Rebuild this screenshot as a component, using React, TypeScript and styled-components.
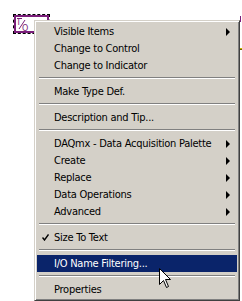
import styled, { createGlobalStyle } from "styled-components";

const GlobalStyle = createGlobalStyle`
    html, body {
        margin: 0;
        padding: 0;
        background: #ffffff;
    }
`;

type MenuEntry =
    | { kind: "item"; label: string; submenu?: boolean; checked?: boolean; active?: boolean }
    | { kind: "separator" };

const ENTRIES: MenuEntry[] = [
    { kind: "item", label: "Visible Items", submenu: true },
    { kind: "item", label: "Change to Control" },
    { kind: "item", label: "Change to Indicator" },
    { kind: "separator" },
    { kind: "item", label: "Make Type Def." },
    { kind: "separator" },
    { kind: "item", label: "Description and Tip..." },
    { kind: "separator" },
    { kind: "item", label: "DAQmx - Data Acquisition Palette", submenu: true },
    { kind: "item", label: "Create", submenu: true },
    { kind: "item", label: "Replace", submenu: true },
    { kind: "item", label: "Data Operations", submenu: true },
    { kind: "item", label: "Advanced", submenu: true },
    { kind: "separator" },
    { kind: "item", label: "Size To Text", checked: true },
    { kind: "separator" },
    { kind: "item", label: "I/O Name Filtering...", active: true },
    { kind: "separator" },
    { kind: "item", label: "Properties" },
];

const Canvas = styled.div`
    position: relative;
    width: 242px;
    height: 301px;
    overflow: hidden;
    background: #ffffff;
    padding: 20px 0 0 34px;
    box-sizing: border-box;
`;

// the I/O name constant on the block diagram, with its selection marquee
const Constant = styled.div`
    position: absolute;
    left: 13px;
    top: 14px;
    width: 37px;
    height: 20px;
    box-sizing: border-box;
    border: 1px dashed #000000;
    box-shadow: inset 0 0 0 2px #7a1e7a;
    background: #ffffff;
    padding: 2px 0 0 3px;
`;

const Wire = styled.div<{ $color: string; $top: number; $w: number; $h: number }>`
    position: absolute;
    left: 240px;
    top: ${(p) => p.$top}px;
    width: ${(p) => p.$w}px;
    height: ${(p) => p.$h}px;
    background: ${(p) => p.$color};
`;

const Menu = styled.div`
    position: relative;
    width: 206px;
    box-sizing: border-box;
    background: #d4d0c8;
    border: 1px solid;
    border-color: #d4d0c8 #404040 #404040 #d4d0c8;
    box-shadow: inset 1px 1px #ffffff, inset -1px -1px #808080;
    padding: 2px;
    display: flex;
    flex-direction: column;
    font-family: "DejaVu Sans Condensed", "DejaVu Sans", sans-serif;
    font-size: 11px;
    letter-spacing: -0.25px;
    color: #000000;
`;

const Item = styled.div<{ $active?: boolean }>`
    display: flex;
    align-items: center;
    height: 17px;
    white-space: nowrap;
    background: ${(p) => (p.$active ? "#0a246a" : "transparent")};
    color: ${(p) => (p.$active ? "#ffffff" : "#000000")};
`;

const Gutter = styled.span`
    flex: 0 0 17px;
    display: flex;
    align-items: center;
    padding-left: 5px;
    box-sizing: border-box;
`;

const Label = styled.span`
    flex: 1;
    line-height: 17px;
`;

const Separator = styled.div`
    height: 9px;
    display: flex;
    flex-direction: column;
    padding: 3px 2px 0;
    box-sizing: border-box;

    &::before {
        content: "";
        display: block;
        height: 1px;
        background: #808080;
    }

    &::after {
        content: "";
        display: block;
        height: 1px;
        background: #ffffff;
    }
`;

const SubArrow = styled.span`
    flex: 0 0 auto;
    margin-right: 7px;
    width: 0;
    height: 0;
    border-top: 4px solid transparent;
    border-bottom: 4px solid transparent;
    border-left: 4px solid #000000;
`;

const Cursor = styled.svg`
    position: absolute;
    left: 159px;
    top: 268px;
`;

export default function App(): JSX.Element {
    return (
        <>
            <GlobalStyle />
            <Canvas>
                <Constant>
                    <svg width="12" height="15" viewBox="0 0 12 15">
                        <line x1="0" y1="1.5" x2="5" y2="1.5" stroke="#7a1e7a" strokeWidth="1" />
                        <text x="0.5" y="8" fontSize="8" fontFamily="DejaVu Sans" fill="#7a1e7a">
                            I
                        </text>
                        <line x1="2" y1="12" x2="8" y2="3" stroke="#7a1e7a" strokeWidth="1" />
                        <text x="5" y="14" fontSize="8" fontFamily="DejaVu Sans" fill="#7a1e7a">
                            O
                        </text>
                    </svg>
                </Constant>
                <Wire $color="#7a1e7a" $top={16} $w={1} $h={6} />
                <Wire $color="#c8b400" $top={48} $w={2} $h={1} />
                <Wire $color="#6b5e00" $top={49} $w={2} $h={1} />

                <Menu>
                    {ENTRIES.map((entry, i) => {
                        if (entry.kind === "separator") {
                            return <Separator key={i} />;
                        }

                        return (
                            <Item key={i} $active={entry.active}>
                                <Gutter>
                                    {entry.checked && (
                                        <svg width="7" height="7" viewBox="0 0 7 7">
                                            <path
                                                d="M0.5 3.5 L2.5 6 L6.5 0.5"
                                                fill="none"
                                                stroke="#000"
                                                strokeWidth="1.4"
                                            />
                                        </svg>
                                    )}
                                </Gutter>
                                <Label>{entry.label}</Label>
                                {entry.submenu && <SubArrow />}
                            </Item>
                        );
                    })}
                </Menu>

                <Cursor width="13" height="21" viewBox="0 0 13 21">
                    <path
                        d="M0.5 0.5 L0.5 16.5 L4.5 12.5 L7.5 19.5 L9.5 18.5 L6.5 11.5 L11.5 11.5 Z"
                        fill="#ffffff"
                        stroke="#000000"
                        strokeWidth="1"
                    />
                </Cursor>
            </Canvas>
        </>
    );
}
